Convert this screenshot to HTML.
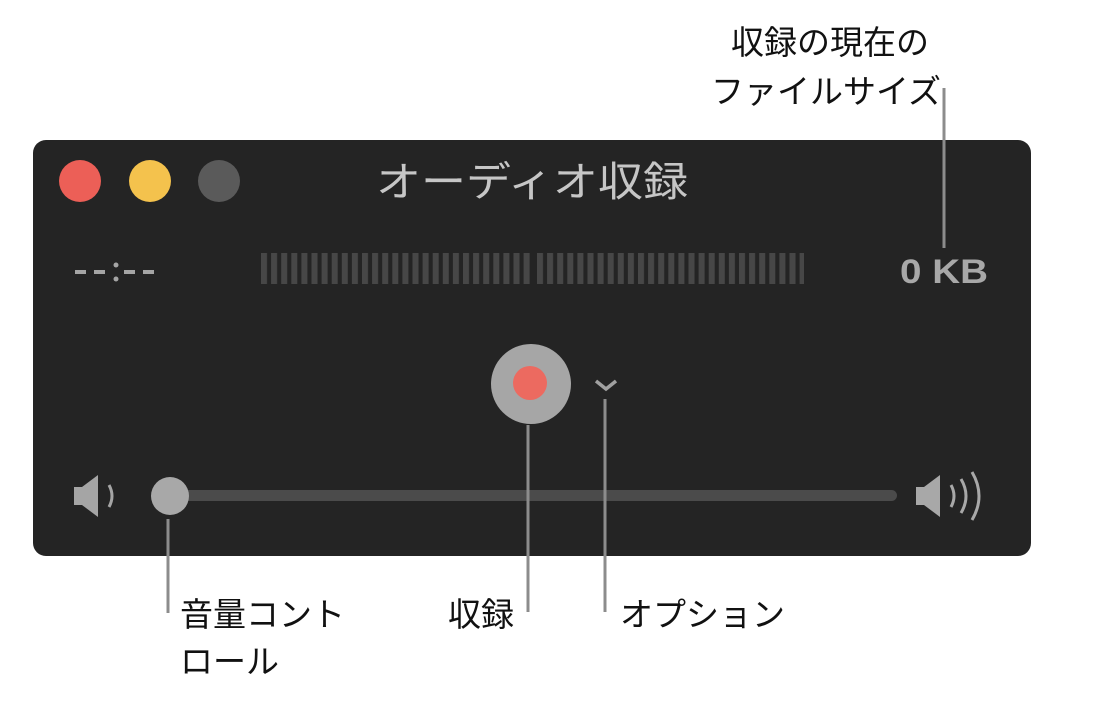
<!DOCTYPE html>
<html><head><meta charset="utf-8"><style>
html,body{margin:0;padding:0;background:#fff;}
svg{display:block}
text{font-family:"Liberation Sans","Noto Sans CJK JP",sans-serif;}
</style></head><body>
<svg width="1094" height="722" viewBox="0 0 1094 722" xmlns="http://www.w3.org/2000/svg">
<defs>
<pattern id="pb1" x="261" y="0" width="10.1" height="40" patternUnits="userSpaceOnUse"><rect x="0" y="0" width="6" height="40" fill="#474747"/></pattern>
<pattern id="pb2" x="537" y="0" width="10.1" height="40" patternUnits="userSpaceOnUse"><rect x="0" y="0" width="6" height="40" fill="#474747"/></pattern>
</defs>
<rect x="33" y="140" width="998" height="416" rx="13" fill="#242424"/>
<circle cx="80" cy="181" r="21" fill="#ec5f57"/>
<circle cx="150" cy="181" r="21" fill="#f4c24d"/>
<circle cx="219" cy="181" r="21" fill="#5a5a5a"/>
<text x="532" y="196" font-size="41" fill="#c6c6c6" text-anchor="middle" textLength="312" lengthAdjust="spacingAndGlyphs">オーディオ収録</text>
<g fill="#a5a5a5">
<rect x="75" y="270" width="11" height="4"/><rect x="94" y="270" width="11" height="4"/>
<circle cx="116" cy="265" r="2.5"/><circle cx="116" cy="279" r="2.5"/>
<rect x="124" y="270" width="11" height="4"/><rect x="143" y="270" width="11" height="4"/>
</g>
<rect x="261" y="253" width="272" height="31" fill="url(#pb1)"/>
<rect x="537" y="253" width="267" height="31" fill="url(#pb2)"/>
<text x="900" y="283" font-size="34" font-weight="bold" fill="#a8a8a8" textLength="88" lengthAdjust="spacingAndGlyphs">0 KB</text>
<circle cx="531" cy="384" r="40" fill="#a6a6a6"/>
<circle cx="530" cy="383" r="17" fill="#ec6a60"/>
<path d="M596 381 L606 389 L616 381" stroke="#a0a0a0" stroke-width="3.5" fill="none"/>
<rect x="170" y="490" width="727" height="11" rx="5.5" fill="#4b4b4b"/>
<circle cx="170" cy="496" r="19" fill="#a8a8a8"/>
<path d="M74 487 h8 l16 -12 v42 l-16 -12 h-8z" fill="#a5a5a5"/>
<path d="M109 485 q6 11 0 22" stroke="#a5a5a5" stroke-width="3" fill="none"/>
<path d="M916 487 h8 l16 -12 v42 l-16 -12 h-8z" fill="#a8a8a8"/>
<path d="M951 485 q6 11 0 22 M961 479 q10 17 0 34 M972 472 q14 24 0 48" stroke="#a8a8a8" stroke-width="3" fill="none"/>
<g stroke="#8c8c8c" stroke-width="3">
<line x1="944" y1="88" x2="944" y2="248"/>
<line x1="528" y1="425" x2="528" y2="612"/>
<line x1="605" y1="399" x2="605" y2="612"/>
<line x1="168" y1="519" x2="168" y2="613"/>
</g>
<g font-size="33" fill="#111">
<text x="830" y="54" text-anchor="middle">収録の現在の</text>
<text x="826" y="103" text-anchor="middle">ファイルサイズ</text>
<text x="180" y="626">音量コント</text>
<text x="180" y="673">ロール</text>
<text x="448" y="626">収録</text>
<text x="620" y="626">オプション</text>
</g>
</svg>
</body></html>
